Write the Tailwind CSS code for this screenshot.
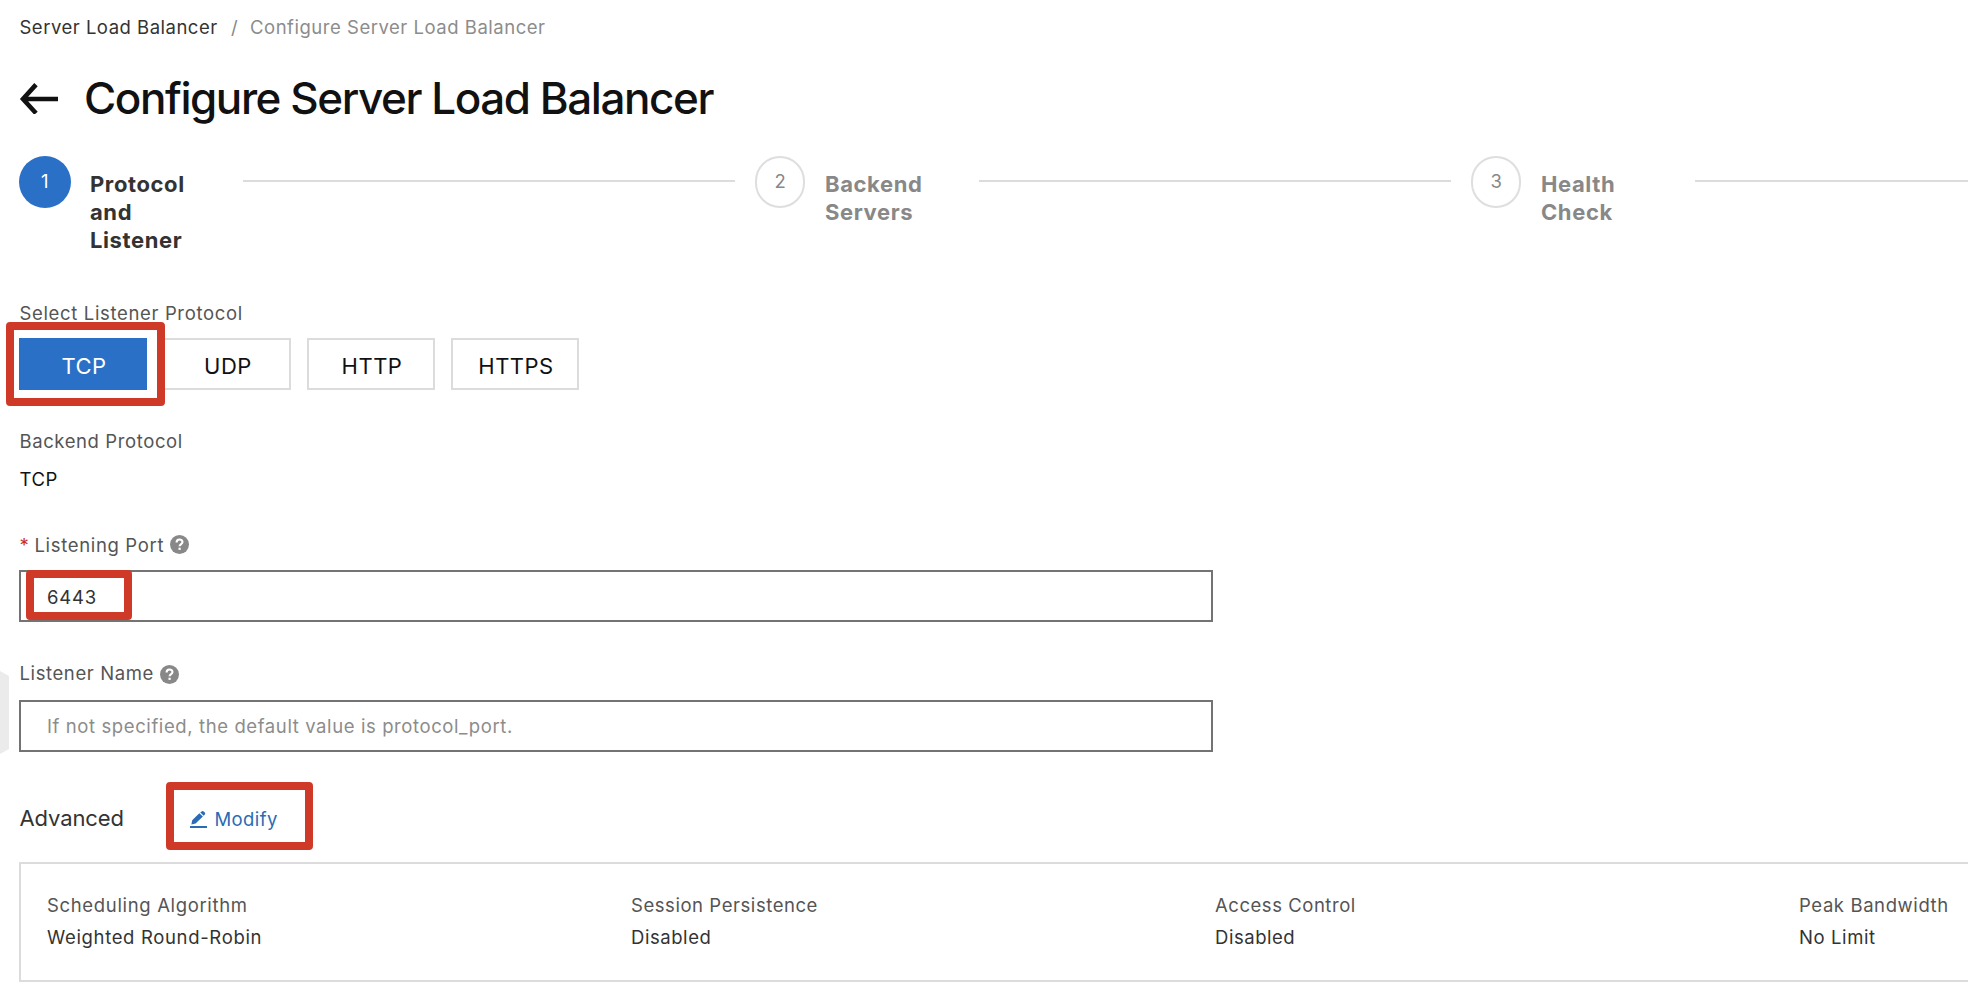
<!DOCTYPE html>
<html lang="en">
<head>
<meta charset="utf-8">
<title>Configure Server Load Balancer</title>
<script src="https://cdn.jsdelivr.net/npm/@tailwindcss/browser@4"></script>
</head>
<body class="bg-white overflow-hidden">
<div class="relative w-[1968px] h-[990px] overflow-hidden bg-white pl-[19px] pt-[15px] font-['Inter','Liberation_Sans',sans-serif] text-[18.5px] leading-[24px] tracking-[0.5px] text-[#333]">

  <!-- Breadcrumb -->
  <nav class="flex whitespace-nowrap">
    <span class="w-[211px] pl-[0.5px]">Server Load Balancer</span>
    <span class="w-[20px] pl-px text-[#888]">/</span>
    <span class="tracking-[0.52px] text-[#8c8c8c]">Configure Server Load Balancer</span>
  </nav>

  <!-- Title -->
  <header class="mt-[29px] flex h-[60px] items-center">
    <svg class="h-[32px] w-[40px] shrink-0" viewBox="0 0 40 32" fill="none" stroke="#111" stroke-width="4.6"><path d="M39 17H4M17 2.6L4 17L17 31.2" stroke-linejoin="miter"/></svg>
    <h1 class="ml-[25px] whitespace-nowrap text-[44px] leading-[60px] font-medium tracking-[-1.44px] text-[#111]">Configure Server Load Balancer</h1>
  </header>

  <!-- Steps -->
  <ol class="mt-[28px] flex h-[98px] items-start text-[22px] leading-[28px] font-bold tracking-[0.6px]">
    <li class="flex w-[736px] shrink-0 items-start">
      <span class="flex h-[52px] w-[52px] shrink-0 items-center justify-center rounded-full bg-[#2970c6] pb-[2px] text-[18.5px] font-normal text-white">1</span>
      <span class="ml-[19px] w-[134px] shrink-0 pt-[14px]">Protocol<br>and<br>Listener</span>
      <span class="ml-[19px] mt-[24px] h-[2px] w-[492px] bg-[#dcdcdc]"></span>
    </li>
    <li class="flex w-[716px] shrink-0 items-start text-[#888]">
      <span class="flex h-[52px] w-[50px] shrink-0 items-center justify-center rounded-full border-2 border-[#dedede] pb-[2px] pl-px text-[18.5px] font-normal">2</span>
      <span class="ml-[20px] w-[134px] shrink-0 pt-[14px]">Backend<br>Servers</span>
      <span class="ml-[20px] mt-[24px] h-[2px] w-[472px] bg-[#dcdcdc]"></span>
    </li>
    <li class="flex w-[716px] shrink-0 items-start text-[#888]">
      <span class="flex h-[52px] w-[50px] shrink-0 items-center justify-center rounded-full border-2 border-[#dedede] pb-[2px] pl-px text-[18.5px] font-normal">3</span>
      <span class="ml-[20px] w-[134px] shrink-0 pt-[14px]">Health<br>Check</span>
      <span class="ml-[20px] mt-[24px] h-[2px] w-[472px] bg-[#dcdcdc]"></span>
    </li>
  </ol>

  <!-- Listener protocol -->
  <div class="mt-[47px] pl-[0.5px] tracking-[0.65px] text-[#555]">Select Listener Protocol</div>
  <div class="mt-[13px] flex gap-[16px] text-[22px] text-[#111]">
    <div class="relative h-[52px] w-[128px]">
      <button class="h-[52px] w-[128px] bg-[#2970c6] pl-[2px] pt-[4px] text-white">TCP</button>
      <span class="absolute -left-[13px] -top-[16px] z-10 h-[84px] w-[159px] rounded-[4px] border-8 border-[#cf3a28]"></span>
    </div>
    <button class="h-[52px] w-[128px] border-2 border-[#dcdcdc] pl-[2px] pt-[4px]">UDP</button>
    <button class="h-[52px] w-[128px] border-2 border-[#dcdcdc] pl-[2px] pt-[4px]">HTTP</button>
    <button class="h-[52px] w-[128px] border-2 border-[#dcdcdc] pl-[2px] pt-[4px]">HTTPS</button>
  </div>

  <!-- Backend protocol -->
  <div class="mt-[39px] pl-[0.5px] tracking-[0.6px] text-[#555]">Backend Protocol</div>
  <div class="mt-[14px] pl-[0.5px] text-[#111]">TCP</div>

  <!-- Listening port -->
  <div class="mt-[42px] flex pl-[0.5px] tracking-[0.66px] text-[#555]">
    <span class="w-[15px] text-[#c8301c]">*</span>
    <span>Listening Port</span>
    <svg class="ml-[6px] mt-[2px] h-[19px] w-[19px]" viewBox="0 0 19 19"><circle cx="9.5" cy="9.5" r="9.5" fill="#888"/><path d="M6.6 7.5C6.6 3.6 12.5 3.7 12.5 7.1C12.5 9.1 9.6 9.1 9.6 11.3" fill="none" stroke="#fff" stroke-width="2.1"/><rect x="8.5" y="12.7" width="2.2" height="2.2" fill="#fff"/></svg>
  </div>
  <div class="relative mt-[13px] flex h-[52px] w-[1194px] items-center border-2 border-[#737373] pl-[26px] pt-[2px]">
    <span class="tracking-[0.8px]">6443</span>
    <span class="absolute left-[5px] -top-[2px] h-[50px] w-[106px] rounded-[4px] border-8 border-[#cf3a28]"></span>
  </div>

  <!-- Listener name -->
  <div class="mt-[39px] flex pl-[0.5px] tracking-[0.6px] text-[#555]">
    <span>Listener Name</span>
    <svg class="ml-[6px] mt-[4px] h-[19px] w-[19px]" viewBox="0 0 19 19"><circle cx="9.5" cy="9.5" r="9.5" fill="#888"/><path d="M6.6 7.5C6.6 3.6 12.5 3.7 12.5 7.1C12.5 9.1 9.6 9.1 9.6 11.3" fill="none" stroke="#fff" stroke-width="2.1"/><rect x="8.5" y="12.7" width="2.2" height="2.2" fill="#fff"/></svg>
  </div>
  <div class="mt-[15px] flex h-[52px] w-[1194px] items-center border-2 border-[#737373] pl-[26px] tracking-[0.6px] text-[#8c8c8c]">
    <span>If not specified, the default value is protocol_port.</span>
  </div>

  <!-- Advanced -->
  <div class="mt-[52px] flex h-[28px] items-center pl-[0.5px]">
    <span class="w-[146px] text-[22px] leading-[28px] tracking-[-0.1px]">Advanced</span>
    <div class="relative flex h-[68px] w-[147px] items-center pl-[24px] text-[#2a6bb5]">
      <span class="absolute -top-[2px] left-0 h-[68px] w-[147px] rounded-[4px] border-8 border-[#cf3a28]"></span>
      <svg class="mt-[2px] h-[17px] w-[17px]" viewBox="0 0 17 17" fill="#2a6bb5"><path d="M0 15H17V17H0ZM1.4 13.4L2.2 9.2L9.3 2.2L12.9 5.6L5.6 12.6ZM10.3 1.4L11.6 .4Q12.7 -.4 13.7 .5L14.8 1.6Q15.6 2.6 14.8 3.6L13.7 4.8Z"/></svg>
      <span class="ml-[8px] pt-[2px] tracking-[0.4px]">Modify</span>
    </div>
  </div>

  <!-- Summary card -->
  <section class="mt-[30px] grid h-[120px] w-[2366px] grid-cols-4 border-2 border-[#dcdcdc] pl-[26px] pt-[29px]">
    <div class="tracking-[0.66px]"><p class="text-[#555]">Scheduling Algorithm</p><p class="mt-[8px]">Weighted Round-Robin</p></div>
    <div class="tracking-[0.56px]"><p class="text-[#555]">Session Persistence</p><p class="mt-[8px]">Disabled</p></div>
    <div class="tracking-[0.54px]"><p class="text-[#555]">Access Control</p><p class="mt-[8px]">Disabled</p></div>
    <div class="tracking-[0.6px]"><p class="text-[#555]">Peak Bandwidth</p><p class="mt-[8px]">No Limit</p></div>
  </section>

  <!-- Collapsed side panel handle -->
  <svg class="absolute left-0 top-[671px] h-[83px] w-[9px]" viewBox="0 0 9 83"><path d="M0 0L9 5V78L0 83Z" fill="#ebebeb"/></svg>
</div>
</body>
</html>
